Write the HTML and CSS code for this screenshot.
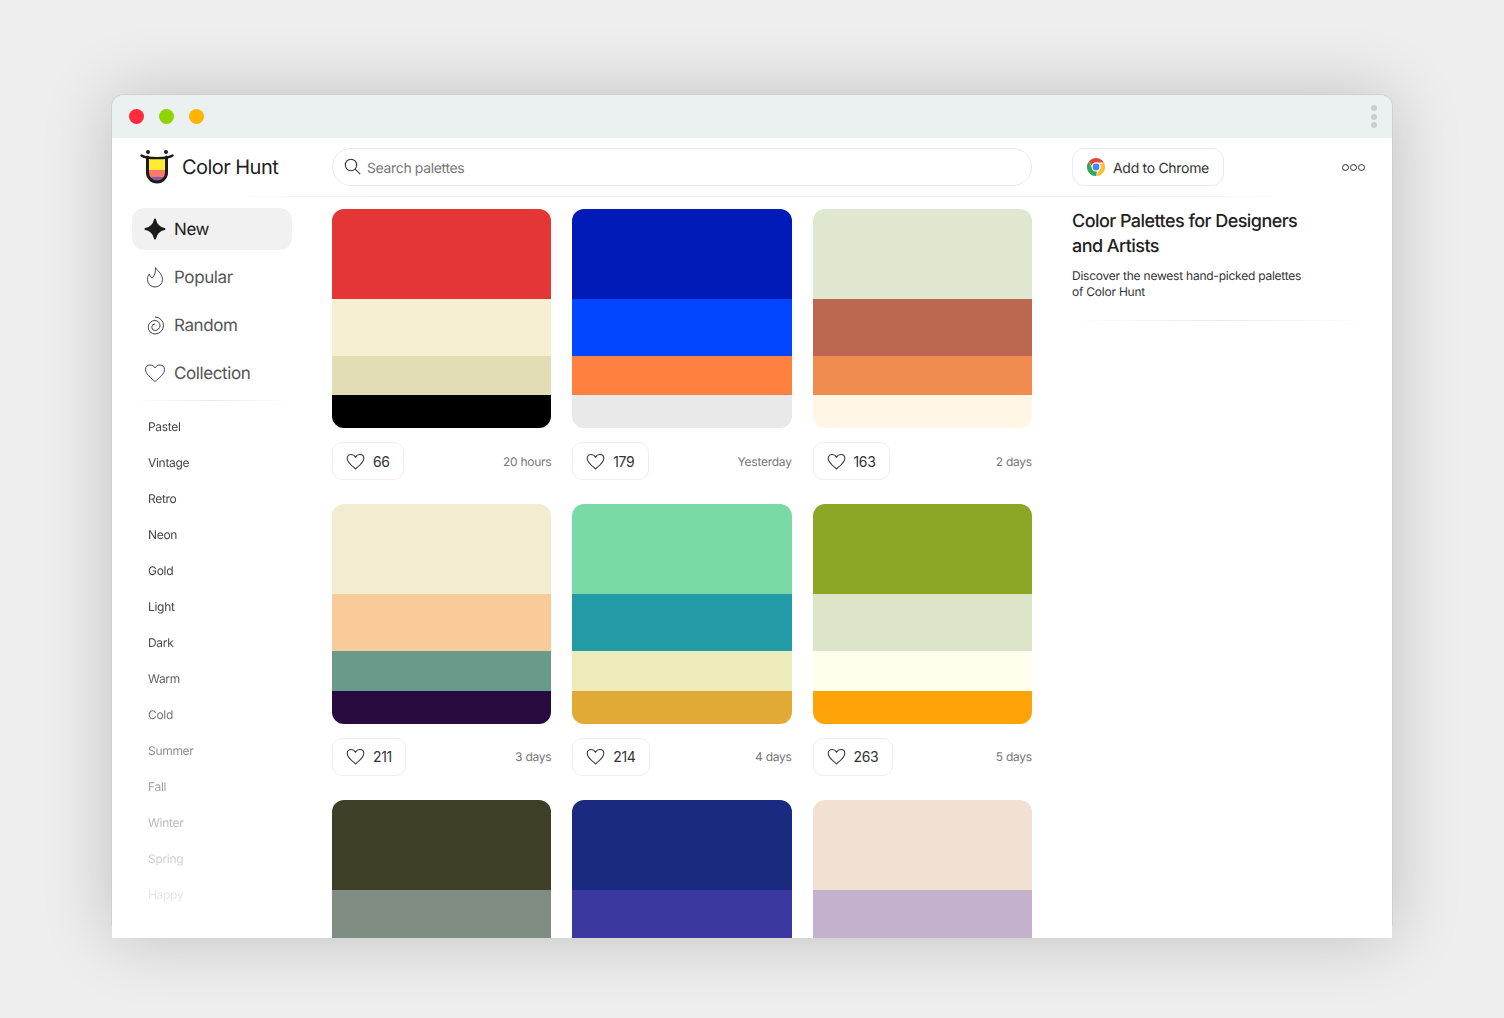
FILE: index.html
```html
<!DOCTYPE html>
<html lang="en">
<head>
<meta charset="utf-8">
<title>Color Hunt</title>
<link rel="stylesheet" href="styles.css">
</head>
<body>
<div class="frame">
<div class="window">
  <div class="titlebar">
    <div class="lights"><span class="light red"></span><span class="light green"></span><span class="light amber"></span></div>
    <div class="grip"><span></span><span></span><span></span></div>
  </div>
  <div class="app">
    <header class="topbar">
      <a class="logo">
        <svg class="logo-mark" viewBox="0 0 34 34" width="34" height="34">
          <path class="logo-coral" d="M8 8h18v14.500a9 9 0 0 1-18 0z"/>
          <rect class="logo-yellow" x="8" y="8" width="18" height="12"/>
          <path class="logo-purple" d="M9 27h16c-1.500 3-4.500 4.500-8 4.500s-6.500-1.500-8-4.500z"/>
          <path class="logo-outline" d="M7.500 7v15.500a9.500 9.500 0 0 0 19 0V7"/>
          <path class="logo-smile" d="M1.500 5.500C6 9 28 9 32.500 5.500"/>
          <circle class="logo-eye" cx="8" cy="2" r="2"/>
          <circle class="logo-eye" cx="26" cy="2" r="2"/>
        </svg>
        <span class="logo-text">Color Hunt</span>
      </a>
      <div class="search">
        <svg class="search-icon" viewBox="0 0 18 18" width="18" height="18"><circle cx="7" cy="7" r="5.700"/><path d="M11.200 11.200l5 5"/></svg>
        <span class="search-text">Search palettes</span>
      </div>
      <div class="top-actions">
        <a class="chrome-btn">
          <svg viewBox="0 0 18 18" width="18" height="18">
            <path fill="#e5463a" d="M9 0a9 9 0 0 1 7.800 4.500H9a4.500 4.500 0 0 0-4.300 3.200L1.900 3.500A9 9 0 0 1 9 0z"/>
            <path fill="#fbc02d" d="M16.800 4.500A9 9 0 0 1 9 18l3.900-6.700A4.500 4.500 0 0 0 12.900 6.700z"/>
            <path fill="#34a853" d="M1.900 3.500l3.900 7.800A4.500 4.500 0 0 0 10 13.400L9 18A9 9 0 0 1 1.900 3.500z"/>
            <circle cx="9" cy="9" r="4.500" fill="#fff"/>
            <circle cx="9" cy="9" r="3.400" fill="#4a86f0"/>
          </svg>
          <span class="chrome-text">Add to Chrome</span>
        </a>
        <div class="more"><span></span><span></span><span></span></div>
      </div>
    </header>

    <aside class="sidebar">
      <nav class="nav">
        <a class="nav-item active">
          <svg class="nav-icon" viewBox="0 0 24 24" width="24" height="24"><path class="star" d="M12 2.500C13 7.500 16.500 11 21.500 12 16.500 13 13 16.500 12 21.500 11 16.500 7.500 13 2.500 12 7.500 11 11 7.500 12 2.500z"/></svg>
          <span class="nav-label">New</span>
        </a>
        <a class="nav-item">
          <svg class="nav-icon line" viewBox="0 0 24 24" width="24" height="24"><path d="M12.500 2.500C13 5 19.500 8 19.500 14.500a7.500 7.500 0 0 1-15 0C4.500 12 5 10.500 6.500 9 6.800 11 7.800 12.500 9 13 11.500 11 13 6.500 12.500 2.500z"/></svg>
          <span class="nav-label">Popular</span>
        </a>
        <a class="nav-item">
          <svg class="nav-icon line" viewBox="0 0 24 24" width="24" height="24"><path d="M12 4A8.500 8.500 0 0 1 12 21 6.750 6.750 0 0 1 12 7.500 5 5 0 0 1 12 17.500 3.250 3.250 0 0 1 12 11"/></svg>
          <span class="nav-label">Random</span>
        </a>
        <a class="nav-item">
          <svg class="nav-icon line" viewBox="0 0 24 24" width="24" height="24"><path d="M12 20.500C8 17 2.500 13 2.500 8.500 2.500 5.500 4.800 4 7 4c2.200 0 4 1.200 5 3 1-1.800 2.800-3 5-3 2.200 0 4.500 1.500 4.500 4.500C21.500 13 16 17 12 20.500z"/></svg>
          <span class="nav-label">Collection</span>
        </a>
      </nav>
      <div class="side-rule"></div>
      <ul class="tags">
        <li>Pastel</li><li>Vintage</li><li>Retro</li><li>Neon</li><li>Gold</li><li>Light</li><li>Dark</li><li>Warm</li><li>Cold</li><li>Summer</li><li>Fall</li><li>Winter</li><li>Spring</li><li>Happy</li>
      </ul>
    </aside>

    <main class="feed">
      <article class="card">
        <div class="palette"><i class="s1 c-e43636"></i><i class="s2 c-f6efd2"></i><i class="s3 c-e2ddb4"></i><i class="s4 c-000000"></i></div>
        <div class="meta"><button class="like"><svg class="heart" viewBox="0 0 24 24" width="21" height="21"><path d="M12 20.500C8 17 2.500 13 2.500 8.500 2.500 5.500 4.800 4 7 4c2.200 0 4 1.200 5 3 1-1.800 2.800-3 5-3 2.200 0 4.500 1.500 4.500 4.500C21.500 13 16 17 12 20.500z"/></svg><span>66</span></button><span class="age">20 hours</span></div>
      </article>
      <article class="card">
        <div class="palette"><i class="s1 c-001bb7"></i><i class="s2 c-0046ff"></i><i class="s3 c-ff8040"></i><i class="s4 c-e9e9e9"></i></div>
        <div class="meta"><button class="like"><svg class="heart" viewBox="0 0 24 24" width="21" height="21"><path d="M12 20.500C8 17 2.500 13 2.500 8.500 2.500 5.500 4.800 4 7 4c2.200 0 4 1.200 5 3 1-1.800 2.800-3 5-3 2.200 0 4.500 1.500 4.500 4.500C21.500 13 16 17 12 20.500z"/></svg><span>179</span></button><span class="age">Yesterday</span></div>
      </article>
      <article class="card">
        <div class="palette"><i class="s1 c-dfe7cf"></i><i class="s2 c-bc6750"></i><i class="s3 c-f18c50"></i><i class="s4 c-fff6e5"></i></div>
        <div class="meta"><button class="like"><svg class="heart" viewBox="0 0 24 24" width="21" height="21"><path d="M12 20.500C8 17 2.500 13 2.500 8.500 2.500 5.500 4.800 4 7 4c2.200 0 4 1.200 5 3 1-1.800 2.800-3 5-3 2.200 0 4.500 1.500 4.500 4.500C21.500 13 16 17 12 20.500z"/></svg><span>163</span></button><span class="age">2 days</span></div>
      </article>
      <article class="card">
        <div class="palette"><i class="s1 c-f2edd1"></i><i class="s2 c-f9cb99"></i><i class="s3 c-689b8a"></i><i class="s4 c-280a3e"></i></div>
        <div class="meta"><button class="like"><svg class="heart" viewBox="0 0 24 24" width="21" height="21"><path d="M12 20.500C8 17 2.500 13 2.500 8.500 2.500 5.500 4.800 4 7 4c2.200 0 4 1.200 5 3 1-1.800 2.800-3 5-3 2.200 0 4.500 1.500 4.500 4.500C21.500 13 16 17 12 20.500z"/></svg><span>211</span></button><span class="age">3 days</span></div>
      </article>
      <article class="card">
        <div class="palette"><i class="s1 c-7adaa5"></i><i class="s2 c-239ba7"></i><i class="s3 c-ececbb"></i><i class="s4 c-e1aa36"></i></div>
        <div class="meta"><button class="like"><svg class="heart" viewBox="0 0 24 24" width="21" height="21"><path d="M12 20.500C8 17 2.500 13 2.500 8.500 2.500 5.500 4.800 4 7 4c2.200 0 4 1.200 5 3 1-1.800 2.800-3 5-3 2.200 0 4.500 1.500 4.500 4.500C21.500 13 16 17 12 20.500z"/></svg><span>214</span></button><span class="age">4 days</span></div>
      </article>
      <article class="card">
        <div class="palette"><i class="s1 c-8ca626"></i><i class="s2 c-dde5c9"></i><i class="s3 c-ffffee"></i><i class="s4 c-ffa408"></i></div>
        <div class="meta"><button class="like"><svg class="heart" viewBox="0 0 24 24" width="21" height="21"><path d="M12 20.500C8 17 2.500 13 2.500 8.500 2.500 5.500 4.800 4 7 4c2.200 0 4 1.200 5 3 1-1.800 2.800-3 5-3 2.200 0 4.500 1.500 4.500 4.500C21.500 13 16 17 12 20.500z"/></svg><span>263</span></button><span class="age">5 days</span></div>
      </article>
      <article class="card">
        <div class="palette"><i class="s1 c-3d3f27"></i><i class="s2 c-7f8c82"></i><i class="s3 c-7f8c82"></i><i class="s4 c-7f8c82"></i></div>
      </article>
      <article class="card">
        <div class="palette"><i class="s1 c-1a2a80"></i><i class="s2 c-3b38a0"></i><i class="s3 c-3b38a0"></i><i class="s4 c-3b38a0"></i></div>
      </article>
      <article class="card">
        <div class="palette"><i class="s1 c-f2e0d3"></i><i class="s2 c-c4b1ce"></i><i class="s3 c-c4b1ce"></i><i class="s4 c-c4b1ce"></i></div>
      </article>
    </main>

    <section class="intro">
      <h1>Color Palettes for Designers and Artists</h1>
      <p>Discover the newest hand-picked palettes of Color Hunt</p>
      <div class="intro-rule"></div>
    </section>
  </div>
</div>
</div>
</body>
</html>
```
FILE: styles.css
```css
* { box-sizing: border-box; }
html, body { margin: 0; height: 100%; overflow: hidden; }
body {
  background: #eee;
  padding: 95px 112px 0;
  font-family: Inter, "Liberation Sans", sans-serif;
  color: #222;
  text-rendering: geometricPrecision;
}
.frame {
  position: relative;
  width: 1280px;
  height: 843px;
  border-radius: 12px 12px 0 0;
  box-shadow: 0 0 70px rgba(0,0,0,.2);
}
.frame::before {
  content: "";
  position: absolute;
  inset: -1px -1px 13px;
  border-radius: 13px 13px 0 0;
  background: #cfcfcf;
}
.window {
  position: relative;
  height: 843px;
  background: #fff;
  border-radius: 12px 12px 0 0;
  overflow: hidden;
}
.titlebar {
  height: 43px;
  background: #ebf0f0;
  display: flex;
  align-items: center;
  justify-content: space-between;
  padding: 0 15px 0 17px;
}
.lights { display: flex; gap: 15px; }
.light { width: 15px; height: 15px; border-radius: 50%; }
.red { background: #ff2a3b; }
.green { background: #8cd500; }
.amber { background: #ffb500; }
.grip { display: flex; flex-direction: column; gap: 2.700px; }
.grip span { width: 6px; height: 6px; border-radius: 50%; background: #c9cfd0; }

.app {
  display: grid;
  grid-template-columns: 220px 700px 1fr;
  grid-template-rows: 59px 1fr;
}
.topbar {
  grid-column: 1 / -1;
  display: grid;
  grid-template-columns: 220px 700px 1fr;
  align-items: center;
  padding-bottom: 1px;
  border-bottom: 1px solid transparent;
  border-image: linear-gradient(90deg, transparent 8%, #eee 20%, #eee 80%, transparent 93%) 1;
}
.logo { display: flex; align-items: center; gap: 8px; padding-left: 28px; }
.logo-mark { display: block; fill: none; }
.logo-yellow { fill: #ffec2e; }
.logo-coral { fill: #ff7a6b; }
.logo-purple { fill: #8c5aa8; }
.logo-outline { stroke: #1c1c1c; stroke-width: 3; stroke-linecap: round; }
.logo-smile { stroke: #1c1c1c; stroke-width: 2.400; stroke-linecap: round; }
.logo-eye { fill: #1c1c1c; }
.logo-text { font-size: 20px; color: #222; letter-spacing: -.55px; }
.search {
  height: 38px;
  border: 1px solid #eaeaea;
  border-radius: 19px;
  display: flex;
  align-items: center;
  gap: 5px;
  padding-left: 11px;
}
.search-icon { fill: none; stroke: #333; stroke-width: 1.100; }
.search-text { font-size: 14px; color: #777; letter-spacing: -.36px; margin-top: 4px; }
.top-actions {
  display: flex;
  align-items: center;
  justify-content: space-between;
  padding: 0 27px 0 40px;
}
.chrome-btn {
  height: 38px;
  width: 152px;
  border: 1px solid #eaeaea;
  border-radius: 12px;
  display: flex;
  align-items: center;
  gap: 8px;
  padding-left: 14px;
  font-size: 14px;
  color: #333;
}
.chrome-text { letter-spacing: -.3px; margin-top: 4px; }
.more { display: flex; gap: 1px; margin-top: 1px; }
.more span { width: 7px; height: 7px; border: 1.300px solid #333; border-radius: 50%; }

.sidebar { padding: 11px 0 0 20px; }
.nav { display: flex; flex-direction: column; gap: 6px; width: 160px; }
.nav-item {
  height: 42px;
  border-radius: 12px;
  display: flex;
  align-items: center;
  gap: 7px;
  padding-left: 11px;
  font-size: 17px;
  letter-spacing: -.4px;
  color: #555;
}
.nav-label { margin-top: 2px; }
.nav-item.active { background: #f1f1f1; color: #222; }
.nav-icon { flex: none; }
.star { fill: #1c1c1c; stroke: #1c1c1c; stroke-width: 2; stroke-linejoin: round; }
.line path { fill: none; stroke: #444; stroke-width: 1; }
.side-rule {
  height: 1px;
  width: 160px;
  margin-top: 6px;
  background: linear-gradient(90deg, transparent, #e8e8e8 50%, transparent);
}
.tags {
  list-style: none;
  margin: 8px 0 0;
  padding: 0 0 0 16px;
  font-size: 12px;
  letter-spacing: -.3px;
  color: #444;
  -webkit-mask-image: linear-gradient(#000 45%, rgba(0,0,0,.08) 100%);
  mask-image: linear-gradient(#000 45%, rgba(0,0,0,.08) 100%);
}
.tags li { height: 36px; line-height: 36px; }

.feed {
  padding-top: 12px;
  display: grid;
  grid-template-columns: repeat(3, 219.400px);
  column-gap: 20.900px;
  row-gap: 23.900px;
  align-content: start;
}
.palette {
  aspect-ratio: 1 / 1;
  border-radius: 12px;
  overflow: hidden;
  display: flex;
  flex-direction: column;
}
.palette i { display: block; }
.s1 { height: 41%; }
.s2 { height: 26%; }
.s3 { height: 18%; }
.s4 { height: 15%; }
.c-e43636 { background: #e43636; }
.c-f6efd2 { background: #f6efd2; }
.c-e2ddb4 { background: #e2ddb4; }
.c-000000 { background: #000; }
.c-001bb7 { background: #001bb7; }
.c-0046ff { background: #0046ff; }
.c-ff8040 { background: #ff8040; }
.c-e9e9e9 { background: #e9e9e9; }
.c-dfe7cf { background: #dfe7cf; }
.c-bc6750 { background: #bc6750; }
.c-f18c50 { background: #f18c50; }
.c-fff6e5 { background: #fff6e5; }
.c-f2edd1 { background: #f2edd1; }
.c-f9cb99 { background: #f9cb99; }
.c-689b8a { background: #689b8a; }
.c-280a3e { background: #280a3e; }
.c-7adaa5 { background: #7adaa5; }
.c-239ba7 { background: #239ba7; }
.c-ececbb { background: #ececbb; }
.c-e1aa36 { background: #e1aa36; }
.c-8ca626 { background: #8ca626; }
.c-dde5c9 { background: #dde5c9; }
.c-ffffee { background: #ffffee; }
.c-ffa408 { background: #ffa408; }
.c-3d3f27 { background: #3d3f27; }
.c-7f8c82 { background: #7f8c82; }
.c-1a2a80 { background: #1a2a80; }
.c-3b38a0 { background: #3b38a0; }
.c-f2e0d3 { background: #f2e0d3; }
.c-c4b1ce { background: #c4b1ce; }
.meta {
  margin-top: 14px;
  display: flex;
  align-items: center;
  justify-content: space-between;
}
.like {
  height: 38px;
  padding: 0 13.500px 0 12px;
  background: #fff;
  border: 1px solid #eee;
  border-radius: 10px;
  display: flex;
  align-items: center;
  gap: 7px;
  font: 14px Inter, "Liberation Sans", sans-serif;
  letter-spacing: -.4px;
  color: #333;
}
.heart { fill: none; stroke: #333; stroke-width: 1.200; }
.age { font-size: 12px; letter-spacing: -.25px; color: #777; }

.intro { padding: 12px 20px 0 40px; }
.intro h1 {
  margin: 0;
  width: 250px;
  font-size: 18px;
  font-weight: 450;
  letter-spacing: -.55px;
  line-height: 25px;
  color: #222;
}
.intro p {
  margin: 9px 0 0;
  width: 240px;
  font-size: 12px;
  letter-spacing: -.23px;
  line-height: 16px;
  color: #333;
}
.intro-rule {
  height: 1px;
  margin-top: 20px;
  background: linear-gradient(90deg, transparent, #e8e8e8 50%, transparent);
}
```
